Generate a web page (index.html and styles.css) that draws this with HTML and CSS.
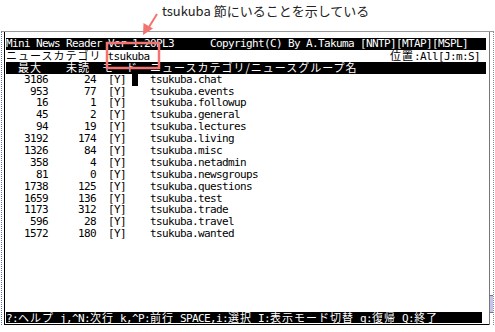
FILE: index.html
```html
<!DOCTYPE html>
<html>
<head>
    <title>Mini News Reader</title>
    <link rel="stylesheet" href="styles.css">
</head>
<body>
    <div class="caption">tsukuba 節にいることを示している</div>

    <div class="window">
        <div class="frame">
            <div class="screen">
                <div class="line inverse title"><span>Mini News Reader Ver 1.20PL3</span><span>Copyright(C) By A.Takuma [NNTP][MTAP][MSPL]</span></div>
                <div class="line status"><span><span class="zen">ニュースカテゴリ</span> tsukuba</span><span><span class="zen">位置</span>:All[J:m:S]</span></div>
                <div class="line inverse head">
                    <span class="zen h-max">最大</span>
                    <span class="zen h-unread">未読</span>
                    <span class="zen h-mode">モード</span>
                    <span class="zen h-name">ニュースカテゴリ/ニュースグループ名</span>
                </div>

                <div class="line group"><span class="num">3186</span><span class="unread">24</span><span class="mode">[Y]</span><span class="cur on"></span><span class="name">tsukuba.chat</span></div>
                <div class="line group"><span class="num">953</span><span class="unread">77</span><span class="mode">[Y]</span><span class="cur"></span><span class="name">tsukuba.events</span></div>
                <div class="line group"><span class="num">16</span><span class="unread">1</span><span class="mode">[Y]</span><span class="cur"></span><span class="name">tsukuba.followup</span></div>
                <div class="line group"><span class="num">45</span><span class="unread">2</span><span class="mode">[Y]</span><span class="cur"></span><span class="name">tsukuba.general</span></div>
                <div class="line group"><span class="num">94</span><span class="unread">19</span><span class="mode">[Y]</span><span class="cur"></span><span class="name">tsukuba.lectures</span></div>
                <div class="line group"><span class="num">3192</span><span class="unread">174</span><span class="mode">[Y]</span><span class="cur"></span><span class="name">tsukuba.living</span></div>
                <div class="line group"><span class="num">1326</span><span class="unread">84</span><span class="mode">[Y]</span><span class="cur"></span><span class="name">tsukuba.misc</span></div>
                <div class="line group"><span class="num">358</span><span class="unread">4</span><span class="mode">[Y]</span><span class="cur"></span><span class="name">tsukuba.netadmin</span></div>
                <div class="line group"><span class="num">81</span><span class="unread">0</span><span class="mode">[Y]</span><span class="cur"></span><span class="name">tsukuba.newsgroups</span></div>
                <div class="line group"><span class="num">1738</span><span class="unread">125</span><span class="mode">[Y]</span><span class="cur"></span><span class="name">tsukuba.questions</span></div>
                <div class="line group"><span class="num">1659</span><span class="unread">136</span><span class="mode">[Y]</span><span class="cur"></span><span class="name">tsukuba.test</span></div>
                <div class="line group"><span class="num">1173</span><span class="unread">312</span><span class="mode">[Y]</span><span class="cur"></span><span class="name">tsukuba.trade</span></div>
                <div class="line group"><span class="num">596</span><span class="unread">28</span><span class="mode">[Y]</span><span class="cur"></span><span class="name">tsukuba.travel</span></div>
                <div class="line group"><span class="num">1572</span><span class="unread">180</span><span class="mode">[Y]</span><span class="cur"></span><span class="name">tsukuba.wanted</span></div>

                <div class="blank"></div>

                <div class="line inverse help">?:<span class="zen">ヘルプ</span> j,^N:<span class="zen">次行</span> k,^P:<span class="zen">前行</span> SPACE,i:<span class="zen">選択</span> I:<span class="zen">表示モード切替</span> q:<span class="zen">復帰</span> Q:<span class="zen">終了</span></div>
            </div>
        </div>
        <div class="scroll"><div class="thumb"></div></div>
    </div>

    <!-- red callout drawn over the screenshot -->
    <svg class="callout" width="495" height="80" viewBox="0 0 495 80">
        <line x1="157" y1="14" x2="149" y2="27" stroke="#f27471" stroke-width="2"/>
        <polygon points="143,35 143.5,23 153,28.5" fill="#f27471"/>
        <rect x="107" y="43" width="52" height="25" fill="none" stroke="#f27471" stroke-width="2.5"/>
    </svg>
</body>
</html>
```

FILE: styles.css
```css
body {
    margin: 0;
    background-color: #fff;
    color: #000;
    position: relative;
}

.caption {
    height: 31px;
    padding-left: 162px;
    box-sizing: border-box;
    font-family: "Noto Sans CJK JP", sans-serif;
    font-size: 13px;
    line-height: 21px;
    color: #222;
}

.window {
    display: flex;
    width: 493px;
    margin-left: 1px;
    padding-left: 2px;
    border-top: 1px solid #9a9a9a;
    border-left: 1px dotted #5b6db5;
    box-sizing: border-box;
}

.frame {
    padding: 6px 3px 1px 1px;
    border-left: 1px solid #000;
    border-bottom: 1px solid #000;
}

.screen {
    width: 480px;
    font-family: "DejaVu Sans Mono", monospace;
    font-size: 11px;
    letter-spacing: -0.62px;
    white-space: nowrap;
}

.line {
    display: flex;
    height: 11.9px;
    line-height: 11.9px;
    overflow: hidden;
}

.zen {
    font-family: "Noto Sans CJK JP", sans-serif;
    font-size: 11px;
    letter-spacing: 1px;
}

.inverse {
    background-color: #000;
    color: #fff;
}

.title {
    padding-right: 18px;
    justify-content: space-between;
}

.status {
    padding-right: 6px;
    justify-content: space-between;
}

.h-max { margin-left: 12px; }
.h-unread { margin-left: 24px; }
.h-mode { margin-left: 12px; }
.h-name { margin-left: 12px; }

.num {
    width: 42px;
    text-align: right;
}

.unread {
    width: 48px;
    text-align: right;
}

.mode {
    margin-left: 12px;
    width: 18px;
}

.cur {
    margin-left: 6px;
    width: 6px;
}

.cur.on {
    background-color: #000;
}

.name {
    margin-left: 12px;
}

.blank {
    height: 71.4px;
}

.help {
    display: block;
    width: 476px;
}

.scroll {
    display: flex;
    flex-direction: column;
    justify-content: flex-end;
    width: 4px;
    border-left: 1px solid #777;
    border-right: 1px dotted #8a8a8a;
    padding-bottom: 12px;
}

.thumb {
    height: 16px;
    background-color: #c4c4ec;
    border-top: 1px solid #777;
    border-bottom: 1px solid #777;
}

.callout {
    position: absolute;
    left: 0;
    top: 0;
}
```
